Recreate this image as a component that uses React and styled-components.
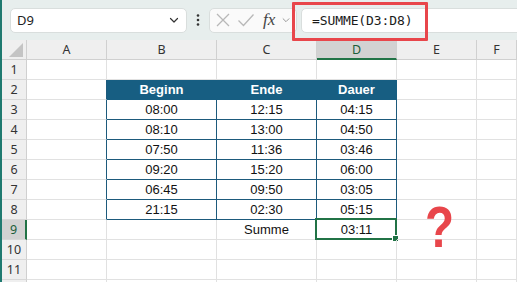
import React from "react";
import styled, { createGlobalStyle, css } from "styled-components";

const Global = createGlobalStyle`
  html, body { margin: 0; padding: 0; background: #fff; }
  body { width: 517px; height: 282px; overflow: hidden; font-family: "Noto Sans", "Liberation Sans", sans-serif; }
`;

const Page = styled.div`
  position: relative;
  width: 517px;
  height: 282px;
  overflow: hidden;
  box-sizing: border-box;
  border-left: 2px solid #1f7a70;
  display: flex;
  flex-direction: column;
  background: #fff;
`;

const TopBar = styled.div`
  height: 40px;
  flex: none;
  background: #e7eeed;
  display: flex;
  align-items: center;
  padding-left: 8px;
  box-sizing: border-box;
`;

const NameBox = styled.div`
  width: 177px;
  height: 25px;
  box-sizing: border-box;
  background: #fff;
  border: 1px solid #d9dedd;
  border-radius: 5px;
  display: flex;
  align-items: center;
  justify-content: space-between;
  padding: 0 6px 0 6px;
  font-family: "Noto Sans", sans-serif;
  font-size: 13px;
  color: #222;
`;

const Dots = styled.div`
  width: 22px;
  display: flex;
  justify-content: center;
  align-items: center;
`;

const ActionBox = styled.div`
  width: 88px;
  height: 25px;
  box-sizing: border-box;
  background: #fafafa;
  border: 1px solid #d9dedd;
  border-radius: 5px;
  display: flex;
  align-items: center;
  padding-left: 5px;
  gap: 6px;
`;

const Fx = styled.span`
  font-family: "Liberation Serif", serif;
  font-style: italic;
  font-size: 17px;
  color: #444;
  margin-left: 2px;
`;

const FormulaBox = styled.div`
  flex: 1;
  height: 25px;
  margin-left: 4px;
  margin-right: -6px;
  box-sizing: border-box;
  background: #fff;
  border: 1px solid #d9dedd;
  border-radius: 5px;
  display: flex;
  align-items: center;
  padding-left: 10px;
  font-family: "DejaVu Sans Mono", "Liberation Mono", monospace;
  font-size: 13px;
  color: #1b1b1b;
  letter-spacing: -0.1px;
`;

const Highlight = styled.div`
  position: absolute;
  left: 290px;
  top: 2px;
  width: 136px;
  height: 39px;
  box-sizing: border-box;
  border: 3px solid #e8464b;
  border-radius: 1px;
  pointer-events: none;
`;

const Grid = styled.div`
  display: grid;
  grid-template-columns: 25px 80px 110px 100px 80px 80px 1fr;
  grid-auto-rows: 20px;
  grid-template-rows: 20px;
`;

const ColHead = styled.div`
  box-sizing: border-box;
  background: ${(p) => (p.$active ? "#d2d2d2" : "#efefef")};
  border-right: 1px solid #d0d0d0;
  border-bottom: ${(p) => (p.$active ? "2px solid #217346" : "1px solid #d0d0d0")};
  display: flex;
  align-items: center;
  justify-content: center;
  font-size: 12.5px;
  color: ${(p) => (p.$active ? "#1b5e3a" : "#333")};
  position: relative;
`;

const RowHead = styled.div`
  box-sizing: border-box;
  background: ${(p) => (p.$active ? "#d2d2d2" : "#efefef")};
  border-right: ${(p) => (p.$active ? "2px solid #217346" : "1px solid #d0d0d0")};
  border-bottom: 1px solid #d8d8d8;
  display: flex;
  align-items: center;
  justify-content: center;
  font-size: 12.5px;
  color: ${(p) => (p.$active ? "#1b5e3a" : "#333")};
`;

const BLUE = "#1d5a7c";

const Cell = styled.div`
  box-sizing: border-box;
  position: relative;
  border-right: 1px solid ${(p) => (p.$blueRight ? BLUE : "#e1e1e1")};
  border-bottom: 1px solid ${(p) => (p.$blueBottom ? BLUE : "#e1e1e1")};
  display: flex;
  align-items: center;
  justify-content: center;
  font-family: "Liberation Sans", Arial, sans-serif;
  font-size: 13px;
  color: #111;
  ${(p) =>
    p.$header &&
    css`
      background: #175e82;
      color: #fff;
      font-weight: bold;
      border-right-color: #175e82;
      border-bottom-color: #175e82;
    `}
`;

const Selection = styled.div`
  position: absolute;
  left: -2px;
  top: -2px;
  right: -1px;
  bottom: -1px;
  border: 2px solid #217346;
  pointer-events: none;
`;

const Handle = styled.div`
  position: absolute;
  right: -4px;
  bottom: -4px;
  width: 5px;
  height: 5px;
  background: #217346;
  border: 1px solid #fff;
`;

const Question = styled.div`
  position: absolute;
  left: 423px;
  top: 198px;
  font-family: "Liberation Sans", Arial, sans-serif;
  font-weight: bold;
  font-size: 58px;
  line-height: 1;
  color: #e8464b;
  transform: scaleX(0.82);
  transform-origin: left top;
`;

const cols = ["A", "B", "C", "D", "E", "F"];

const rows = [
  [],
  ["Beginn", "Ende", "Dauer"],
  ["08:00", "12:15", "04:15"],
  ["08:10", "13:00", "04:50"],
  ["07:50", "11:36", "03:46"],
  ["09:20", "15:20", "06:00"],
  ["06:45", "09:50", "03:05"],
  ["21:15", "02:30", "05:15"],
  [null, "Summe", "03:11"],
  [],
  [],
  [],
];

const Chevron = ({ color = "#333", size = 12 }) => (
  <svg width={size} height={size} viewBox="0 0 12 12">
    <path d="M2.5 4.5 L6 8 L9.5 4.5" fill="none" stroke={color} strokeWidth="1.2" strokeLinecap="round" strokeLinejoin="round" />
  </svg>
);

export default function App() {
  return (
    <>
      <Global />
      <Page>
        <TopBar>
          <NameBox>
            <span>D9</span>
            <Chevron />
          </NameBox>
          <Dots>
            <svg width="4" height="14" viewBox="0 0 4 14">
              <circle cx="2" cy="2.5" r="1.3" fill="#333" />
              <circle cx="2" cy="7" r="1.3" fill="#333" />
              <circle cx="2" cy="11.5" r="1.3" fill="#333" />
            </svg>
          </Dots>
          <ActionBox>
            <svg width="16" height="16" viewBox="0 0 16 16">
              <path d="M2 2 L14 14 M14 2 L2 14" stroke="#b8b8b8" strokeWidth="1.3" />
            </svg>
            <svg width="18" height="16" viewBox="0 0 18 16">
              <path d="M1.5 8.5 L6.5 13.5 L16.5 2.5" fill="none" stroke="#b8b8b8" strokeWidth="1.3" />
            </svg>
            <Fx>fx</Fx>
            <Chevron color="#999" size={10} />
          </ActionBox>
          <FormulaBox>=SUMME(D3:D8)</FormulaBox>
        </TopBar>
        <Grid>
          <ColHead>
            <svg
              width="14"
              height="14"
              viewBox="0 0 14 14"
              style={{ position: "absolute", right: 3, bottom: 2 }}
            >
              <polygon points="14,0 14,14 0,14" fill="#c4c4c4" />
            </svg>
          </ColHead>
          {cols.map((c) => (
            <ColHead key={c} $active={c === "D"}>
              {c}
            </ColHead>
          ))}
          {rows.map((r, i) => {
            const n = i + 1;
            const inTable = n >= 2 && n <= 8;
            const header = n === 2;
            return (
              <React.Fragment key={n}>
                <RowHead $active={n === 9}>{n}</RowHead>
                <Cell $blueRight={inTable} />
                {[0, 1, 2].map((k) => (
                  <Cell
                    key={k}
                    $header={header}
                    $blueRight={inTable}
                    $blueBottom={inTable}
                  >
                    {r[k] || ""}
                    {n === 9 && k === 2 && (
                      <Selection>
                        <Handle />
                      </Selection>
                    )}
                  </Cell>
                ))}
                <Cell />
                <Cell />
              </React.Fragment>
            );
          })}
        </Grid>
        <Highlight />
        <Question>?</Question>
      </Page>
    </>
  );
}
